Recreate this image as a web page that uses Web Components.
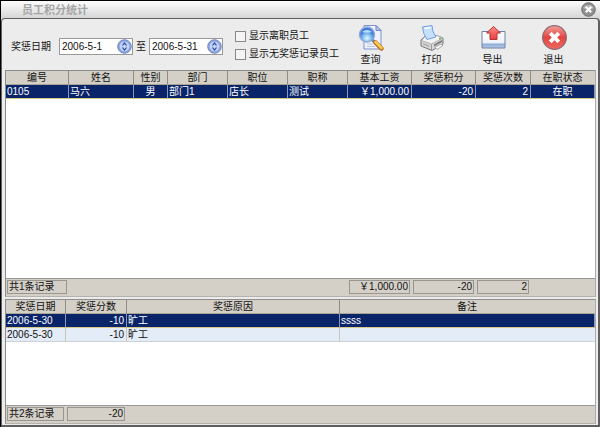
<!DOCTYPE html>
<html lang="zh-CN">
<head>
<meta charset="utf-8">
<title>员工积分统计</title>
<style>
html,body{margin:0;height:100%}
body{font:10px/12px "Liberation Sans","Noto Sans CJK SC",sans-serif;color:#111;background:#000}
#staff{flex-grow:228}
#records{flex-grow:124}
</style>
</head>
<body>
<app-window>
  <span slot="title">员工积分统计</span>
  <tool-bar slot="tools">
    <date-field label="奖惩日期" value="2006-5-1"></date-field>
    <date-field label="至" value="2006-5-31"></date-field>
    <check-option slot="options">显示离职员工</check-option>
    <check-option slot="options">显示无奖惩记录员工</check-option>
    <tool-button slot="actions">
      <svg slot="icon" viewBox="0 0 28 28" width="28" height="28"><defs><radialGradient id="lens" cx=".5" cy=".75"><stop stop-color="#e2fbff"/><stop offset=".5" stop-color="#8cc6f4"/><stop offset="1" stop-color="#3f7cd8"/></radialGradient></defs>
        <path d="M7 1.500h12l5 5V25H7z" fill="#eef3ff" stroke="#8190cb"/><path d="M19 1.500v5h5z" fill="#b9c9f0" stroke="#7585c5"/><path d="M10 20h6M10 22.500h8" stroke="#bac7e8"/>
        <circle cx="10" cy="10.500" r="7.500" fill="url(#lens)" stroke="#8fa9d9" stroke-width="1.500"/><path d="M5 8q5-4 10 0-5 1.500-10 0z" fill="#b9dcfa"/>
        <path d="M15.500 16l3 3" stroke="#6b7b98" stroke-width="3"/><path d="M18.500 18.500l6 6" stroke="#b56c16" stroke-width="4.500" stroke-linecap="round"/><path d="M18.500 18l6 6" stroke="#ffc84e" stroke-width="2.600" stroke-linecap="round"/></svg>查询</tool-button>
    <tool-button slot="actions">
      <svg slot="icon" viewBox="0 0 28 28" width="28" height="28"><path d="M3 16l5-4.500h10l7 2.500v6l-11 6.500L3 22z" fill="#d8d8d8" stroke="#777"/><path d="M3.500 16.500l10 3.500L25 14l-6-2.500H8z" fill="#f3f3f1" stroke="#999" stroke-width=".7"/><path d="M13.500 20.500V26" stroke="#999"/><path d="M16 20.500l8-4.500v2l-8 4.500z" fill="#787878"/><path d="M5 19l6.500 2.500v1.500L5 20.500z" fill="#aaa"/><path d="M17 23.500l6-3.500 2 1.500-6 4z" fill="#fff" stroke="#888" stroke-width=".7"/><circle cx="22" cy="14.500" r="1" fill="#5cb453"/>
        <path d="M4.500 3L14 1.500q0 6.500 4 11.500l-9 2.500Q5 10 4.500 3z" fill="#c5e1ff" stroke="#6f9ee2"/><path d="M6.500 4.500l6-1" stroke="#fff" stroke-width="1.500"/></svg>打印</tool-button>
    <tool-button slot="actions">
      <svg slot="icon" viewBox="0 0 28 28" width="28" height="28"><defs><linearGradient id="tray" x2="0" y2="1"><stop stop-color="#fff"/><stop offset=".7" stop-color="#edf2fa"/><stop offset=".75" stop-color="#8baad4"/><stop offset="1" stop-color="#b6cceb"/></linearGradient><linearGradient id="arrow" x2="0" y2="1"><stop stop-color="#ff8b87"/><stop offset="1" stop-color="#e73f3d"/></linearGradient></defs><path d="M3 7.500h23V24H3z" fill="url(#tray)" stroke="#7181a3"/><path d="M14.500 2.500l7 6.500h-3.500v6.500h-7V9H7.500z" fill="url(#arrow)" stroke="#b93535"/></svg>导出</tool-button>
    <tool-button slot="actions">
      <svg slot="icon" viewBox="0 0 28 28" width="28" height="28"><defs><linearGradient id="stop" x2="0" y2="1"><stop stop-color="#f3a09a"/><stop offset=".5" stop-color="#e34441"/><stop offset="1" stop-color="#ef6b62"/></linearGradient></defs><circle cx="14.500" cy="13.500" r="11.800" fill="url(#stop)" stroke="#8f6873" stroke-width="1.300"/><path d="M10.200 9.200l8.600 8.600M18.800 9.200l-8.600 8.600" stroke="#fff" stroke-width="3.800"/></svg>退出</tool-button>
  </tool-bar>
  <data-grid id="staff"></data-grid>
  <data-grid id="records"></data-grid>
</app-window>
<script>
function shadow(el, html){ const r = el.attachShadow({mode:'open'}); r.innerHTML = html; return r; }

customElements.define('app-window', class extends HTMLElement {
  constructor(){ super(); shadow(this, `<style>
:host{display:flex;flex-direction:column;box-sizing:border-box;min-height:100vh;padding:1px 0 0 1px;background:#000}
header{display:flex;justify-content:space-between;align-items:center;height:17px;padding:0 4px 0 21px;background:linear-gradient(#fdfdfd,#d6d6d6);font-size:11px;color:#a5a5a5;font-weight:bold;flex:none}
button{border:0;padding:0;background:none;display:flex}
main{flex:1;display:flex;flex-direction:column;gap:2px;border:solid #606060;border-width:1px 2px 2px 1px;border-radius:4px 4px 0 0;padding:0 2px 1px 3px;background:#ececec;min-width:0}
.frame{flex:1;display:flex;flex-direction:column;background:#d9d9d9}
</style><div class="frame"><header><slot name="title"></slot><button aria-label="关闭"><svg width="15" height="15" viewBox="0 0 15 15"><circle cx="7.500" cy="7.500" r="6.800" fill="#909090" stroke="#6f6f6f"/><path d="M2 6a6 5 0 0 1 11 0q-5 3-11 0z" fill="#b5b5b5"/><path d="M4.800 4.800l5.400 5.400M10.200 4.800l-5.400 5.400" stroke="#fff" stroke-width="2.200"/></svg></button></header>
<main><slot name="tools"></slot><slot></slot></main></div>`); }
});

customElements.define('tool-bar', class extends HTMLElement {
  constructor(){ super(); shadow(this, `<style>
:host{display:flex;align-items:flex-start;height:49px;flex:none;padding-left:6px}
.dates{display:flex;gap:3px;padding-top:19px}
.options{display:flex;flex-direction:column;gap:6px;padding:11px 0 0 12px}
.actions{display:flex;margin-left:auto;padding:5px 12px 0 0}
</style><div class="dates"><slot></slot></div><div class="options"><slot name="options"></slot></div><div class="actions"><slot name="actions"></slot></div>`); }
});

customElements.define('date-field', class extends HTMLElement {
  constructor(){ super(); shadow(this, `<style>
:host{display:block}
label{display:flex;align-items:center;gap:3px;white-space:nowrap}
:host([label="奖惩日期"]) label{gap:8px}
.box{display:flex;align-items:center;box-sizing:border-box;width:74px;height:17px;border:1px solid #999;background:#fff}
input{border:0;outline:0;padding:0 0 0 2px;margin:0;min-width:0;flex:1;font:inherit;color:inherit;background:none}
button{border:0;padding:0;background:none;display:flex}
</style><label><span></span><div class="box"><input type="text"><button aria-label="调整日期" tabindex="-1"><svg width="15" height="15" viewBox="0 0 15 15"><circle cx="7.500" cy="7.500" r="6.800" fill="#8ba6e4" stroke="#7388b5"/><circle cx="7.500" cy="7.500" r="4.800" fill="#c3d3fa"/><path d="M5.500 6.500l2-2.500 2 2.500M5.500 8.500l2 2.500 2-2.500" fill="none" stroke="#25458f" stroke-width="1.200"/></svg></button></div></label>`); }
  connectedCallback(){
    this.shadowRoot.querySelector('span').textContent = this.getAttribute('label');
    this.shadowRoot.querySelector('input').value = this.getAttribute('value');
  }
});

customElements.define('check-option', class extends HTMLElement {
  constructor(){ super(); shadow(this, `<style>
:host{display:block}
label{display:flex;align-items:center;gap:3px;white-space:nowrap}
input{appearance:none;margin:0;box-sizing:border-box;width:11px;height:11px;border:1px solid #888;background:#f4f4f4}
input:checked{background:#4a6fc0}
</style><label><input type="checkbox"><slot></slot></label>`); }
});

customElements.define('tool-button', class extends HTMLElement {
  constructor(){ super(); shadow(this, `<style>
:host{display:block}
button{display:flex;flex-direction:column;align-items:center;width:61px;border:0;padding:0;background:none;font:inherit;color:inherit}
span{display:block;margin-top:2px}
</style><button><slot name="icon"></slot><span><slot></slot></span></button>`); }
});

customElements.define('data-grid', class extends HTMLElement {
  constructor(){ super(); shadow(this, `<style>
:host{display:flex;flex-direction:column;flex-basis:0;box-sizing:border-box;border:1px solid #8c8c8c;border-bottom-color:#b5b2ab;border-right-color:#aaa;background:#fff;min-width:0}
table{width:100%;table-layout:fixed;border-collapse:separate;border-spacing:0}
th,td{box-sizing:border-box;padding:0 1px;height:14px;line-height:12px;white-space:nowrap;overflow:hidden;border-right:1px solid #c9c5b8}
th{background:#d4d0c8;font-weight:normal;border-right-color:#8f8c86;border-bottom:1px solid #aaa592}
td{text-align:left;background:#e4ecf8;border-bottom:1px solid #cdd2d8}
tr.selected td{color:#fff;background:#0a246a;border-bottom-color:#d6c98c;border-right-color:#8d96b5}
th:last-child,td:last-child{border-right-color:transparent}
td.right{text-align:right;padding-right:2px}
td.center{text-align:center}
.rest{flex:1}
footer{display:grid;height:17px;flex:none;background:#d4d0c8;border-top:1px solid #999}
output{box-sizing:border-box;height:14px;margin:1px 2px 0 1px;padding:0 1px;line-height:12px;border:1px solid #99968f;text-align:right;white-space:nowrap}
</style><table><colgroup></colgroup><thead><tr></tr></thead><tbody></tbody></table><div class="rest"></div><footer></footer>`); }
  set data({columns, rows, totals}){
    const r = this.shadowRoot, q = s => r.querySelector(s);
    q('colgroup').innerHTML = columns.map(c => `<col style="width:${c[1]}px">`).join('');
    q('thead tr').innerHTML = columns.map(c => `<th scope="col">${c[0]}</th>`).join('');
    q('tbody').innerHTML = rows.map((row, i) => `<tr class="${i ? '' : 'selected'}">` + row.map((v, j) => `<td class="${columns[j][2] || ''}">${v}</td>`).join('') + '</tr>').join('');
    q('footer').style.gridTemplateColumns = columns.map(c => `minmax(0,${c[1]}fr)`).join(' ');
    q('footer').innerHTML = totals.map(t => `<output style="grid-column:${t[0]};${t[0] === 1 ? 'text-align:left' : ''}">${t[1]}</output>`).join('');
  }
});

document.getElementById('staff').data = {
  columns: [['编号',63],['姓名',65],['性别',34,'center'],['部门',60],['职位',60],['职称',60],['基本工资',64,'right'],['奖惩积分',64,'right'],['奖惩次数',55,'right'],['在职状态',64,'center']],
  rows: [['0105','马六','男','部门1','店长','测试','￥1,000.00','-20','2','在职']],
  totals: [[1,'共1条记录'],[7,'￥1,000.00'],[8,'-20'],[9,'2']]
};
document.getElementById('records').data = {
  columns: [['奖惩日期',60],['奖惩分数',61,'right'],['奖惩原因',213],['备注',255]],
  rows: [['2006-5-30','-10','旷工','ssss'],['2006-5-30','-10','旷工','']],
  totals: [[1,'共2条记录'],[2,'-20']]
};
</script>
</body>
</html>
